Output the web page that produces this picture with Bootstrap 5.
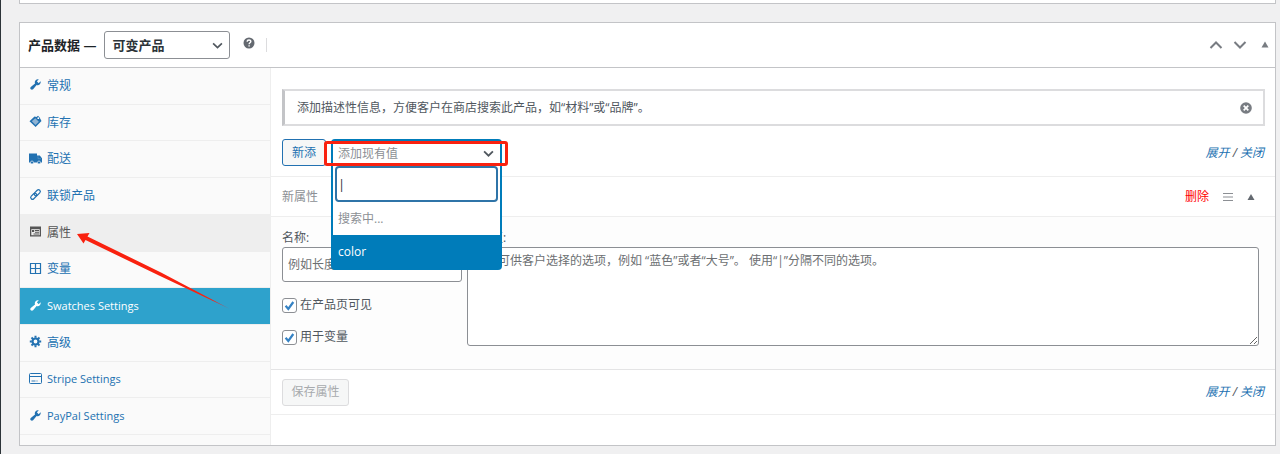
<!DOCTYPE html>
<html lang="zh-CN">
<head>
<meta charset="utf-8">
<meta name="viewport" content="width=device-width, initial-scale=1">
<title>产品数据</title>
<link href="https://cdn.jsdelivr.net/npm/bootstrap@5.3.0/dist/css/bootstrap.min.css" rel="stylesheet">
<style>
  body { background: #f0f0f1; color: #50575e; font-family: "Open Sans", "Noto Sans CJK SC", sans-serif; font-size: 12px; line-height: 18px; }
  a { color: #2271b1; text-decoration: none; }
  svg { display: block; flex: none; }
  .admin-page { border-left: 1px solid #2c3338; padding: 0 4px 9px 18px; min-height: 100vh; }
  .box { background: #fff; border: 1px solid #c3c4c7; }
  .box-above { height: 4px; border-top: 0; margin-bottom: 18px; }
  .box-head { height: 45px; border-bottom: 1px solid #c3c4c7; padding: 0 6px 0 8px; font-size: 13px; color: #1d2327; }
  .type-select { width: 126px; height: 28px; border: 1px solid #8c8f94; border-radius: 3px; padding: 0 24px 0 7px; font-size: 13px; font-weight: 600; color: #2c3338; line-height: 18px;
    background-image: url("data:image/svg+xml,%3Csvg xmlns='http://www.w3.org/2000/svg' viewBox='0 0 10 10'%3E%3Cpath d='M1 3l4 4 4-4' fill='none' stroke='%2350575e' stroke-width='1.5'/%3E%3C/svg%3E"); background-size: 11px; background-position: right 6px center; }
  .help-btn { margin: 0 11px 4px 13px; }
  .head-rule { width: 1px; height: 14px; background: #dcdcde; }
  .head-tools { gap: 10px; }
  .plain-btn { border: 0; background: none; padding: 0; color: #787c82; line-height: 18px; }
  .tabs { width: 251px; flex: none; background: #fafafa; border-right: 1px solid #eee; padding-bottom: 10px; }
  .tabs .tab-item { flex: 1 1 0; border-bottom: 1px solid #eee; }
  .tab-link { height: 100%; padding: 0 9px; gap: 5px; }
  .tab-link svg { width: 13px; height: 13px; margin-bottom: 2px; }
  .tab-link.current { background: #eee; color: #555; }
  .tab-link.swatches { background: #2ea2cc; color: #fff; }
  .latin { font-size: 11px; }
  .arrow { position: absolute; left: 57px; top: 164px; pointer-events: none; }
  .notice { margin: 21px 10px 0 11px; height: 37px; border: 2px solid #dcdcde; border-left: 3px solid #c3c4c7; padding: 0 11px 0 12px; }
  .tool-row { height: 51px; padding: 3px 11px 0; border-bottom: 1px solid #eee; }
  .new-btn { width: 44px; height: 27px; padding: 0; border: 1px solid #2271b1; border-radius: 3px; background: #f6f7f7; color: #2271b1; font-size: 12px; line-height: 18px; }
  .picker { width: 171px; margin-left: 5px; }
  .picker-box { width: 100%; height: 27px; border: 2px solid #007cba; border-bottom: 0; border-radius: 4px 4px 0 0; background: #fff; color: #8c8f94; padding: 0 6px 0 5px; text-align: left; }
  .picker-menu { position: absolute; z-index: 3; top: 100%; left: 0; right: 0; background: #fff; border: 2px solid #007cba; border-top: 0; border-radius: 0 0 4px 4px; }
  .picker-search { display: block; width: calc(100% - 4px); height: 36px; margin: 0 2px; border: 2px solid #2f74a8; border-radius: 4px; padding: 0 1px; font-size: 13px; color: #2c3338; outline: 0; }
  .picker-item { height: 33px; padding: 0 5px; display: flex; align-items: center; }
  .picker-item.wait { color: #8c8f94; }
  .picker-item.on { background: #007cba; color: #fff; }
  .red-frame { position: absolute; z-index: 4; top: 2px; left: -7px; right: -6px; height: 25px; border: 3px solid #f9210f; border-radius: 3px; pointer-events: none; }
  .attr-head { height: 40px; padding: 0 20px 0 11px; border-bottom: 1px solid #eee; color: #8c8f94; gap: 14px; }
  .remove-link { color: #f00; }
  .attr-body { background: #fdfdfd; padding: 12px 16px 23px 11px; gap: 5px; border-bottom: 1px solid #e4e4e5; }
  .name-col { width: 180px; flex: none; }
  .field-label { display: block; height: 18px; }
  .field { display: block; width: 100%; border: 1px solid #8c8f94; border-radius: 3px; background: #fff; font-size: 12px; line-height: 18px; color: #2c3338; }
  .field::placeholder { color: #6c6f72; opacity: 1; }
  input.field { height: 35px; padding: 0 5px; margin-bottom: 14px; }
  textarea.field { height: 99px; padding: 4px 6px; resize: both; }
  .tick { min-height: 18px; padding: 0; margin: 0 0 14px; gap: 3px; }
  .tick .form-check-input { width: 15px; height: 15px; margin: 0; float: none; border: 1px solid #8c8f94; border-radius: 3px; background-color: #fff; background-size: 13px; }
  .tick .form-check-input:checked { background-color: #fff; border-color: #8c8f94;
    background-image: url("data:image/svg+xml,%3Csvg xmlns='http://www.w3.org/2000/svg' viewBox='0 0 13 13'%3E%3Cpath d='M2.6 6.8l2.7 3.2 5-7' fill='none' stroke='%233582c4' stroke-width='2.2'/%3E%3C/svg%3E"); }
  .save-row { height: 45px; padding: 0 11px; border-bottom: 1px solid #eee; }
  .save-btn { width: 67px; height: 27px; padding: 0; border: 1px solid #dcdcde; border-radius: 3px; background: #f6f7f7; color: #a7aaad; font-size: 12px; line-height: 18px; }
  .panel-foot { height: 30px; }
</style>
</head>
<body>
<svg width="0" height="0" class="position-absolute" aria-hidden="true">
  <symbol id="wrench" viewBox="0 0 20 20"><path fill="currentColor" d="M16.68 9.77c-1.34 1.34-3.3 1.67-4.95.99l-5.41 6.52c-.99.99-2.59.99-3.58 0s-.99-2.59 0-3.57l6.52-5.42c-.68-1.65-.35-3.61.99-4.95 1.28-1.28 3.12-1.62 4.72-1.06l-2.89 2.89 2.82 2.82 2.86-2.87c.53 1.58.18 3.39-1.08 4.65z"/></symbol>
</svg>
<main class="admin-page">
  <div class="box box-above"></div>
  <section class="box">
    <header class="box-head d-flex align-items-center">
      <label for="ptype" class="fw-semibold me-2">产品数据 —</label>
      <select id="ptype" class="form-select type-select"><option>可变产品</option></select>
      <button class="plain-btn help-btn" type="button" aria-label="帮助">
        <svg width="12" height="12" viewBox="0 0 12 12"><circle cx="6" cy="6" r="5.5" fill="#646970"/><path d="M4.2 4.7C4.2 2.3 7.9 2.4 7.8 4.6 7.7 5.8 6.1 5.8 6.1 7.2M6.1 8.2v1.4" fill="none" stroke="#fff" stroke-width="1.4"/></svg>
      </button>
      <span class="head-rule me-auto"></span>
      <div class="head-tools d-flex align-items-center">
        <button class="plain-btn" type="button" aria-label="上移"><svg width="14" height="14" viewBox="0 0 14 14"><path d="M1.5 10 7 4.5 12.5 10" fill="none" stroke="currentColor" stroke-width="2"/></svg></button>
        <button class="plain-btn" type="button" aria-label="下移"><svg width="14" height="14" viewBox="0 0 14 14"><path d="M1.5 4 7 9.5 12.5 4" fill="none" stroke="currentColor" stroke-width="2"/></svg></button>
        <button class="plain-btn ms-1" type="button" aria-label="切换"><svg width="8" height="8" viewBox="0 0 8 8"><path d="M4 .5 7.5 6.500h-7z" fill="currentColor"/></svg></button>
      </div>
    </header>
    <div class="d-flex position-relative">
      <ul class="tabs list-unstyled mb-0 d-flex flex-column">
        <li class="tab-item"><a class="tab-link d-flex align-items-center" href="#"><svg><use href="#wrench"/></svg>常规</a></li>
        <li class="tab-item"><a class="tab-link d-flex align-items-center" href="#"><svg viewBox="0 0 13 13"><path d="M.5 6.200 5.500 1.500 7.500 2 9 .8l1.500 1.500L12.500 6 6.600 12z" fill="#2271b1"/><path d="M2.800 6.300 6.300 3.200l3.500 3.500-3.300 3.300z" fill="#8fb3d3"/><circle cx="9.300" cy="3.200" r=".9" fill="#fff"/></svg>库存</a></li>
        <li class="tab-item"><a class="tab-link d-flex align-items-center" href="#"><svg viewBox="0 0 13 13"><path d="M0 1.500h8v2h2.800L13 6.200v4.300H0z" fill="currentColor"/><path d="M9 4.300v2.400h3" fill="none" stroke="#5f97c8" stroke-width=".7"/><g fill="currentColor" stroke="#fafafa" stroke-width=".6"><circle cx="3" cy="10.500" r="1.500"/><circle cx="10" cy="10.500" r="1.500"/></g></svg>配送</a></li>
        <li class="tab-item"><a class="tab-link d-flex align-items-center" href="#"><svg viewBox="0 0 13 13"><g fill="none" stroke="currentColor" stroke-width="1.200" transform="rotate(-45 6.5 6.5)"><rect x=".5" y="4.700" width="7" height="3.600" rx="1.800"/><rect x="5.500" y="4.700" width="7" height="3.600" rx="1.800"/></g></svg>联锁产品</a></li>
        <li class="tab-item"><a class="tab-link current d-flex align-items-center" href="#"><svg viewBox="0 0 13 13"><path d="M1 1.500h11v10H1z" fill="currentColor"/><path d="M2.300 4.200h8.400v6H2.300z" fill="#eee"/><path d="M3 5h2.200v2H3zM6 5h4v1H6zM6 6.800h4v1H6zM4.500 8.600H10v1H4.500z" fill="currentColor"/></svg>属性</a></li>
        <li class="tab-item"><a class="tab-link d-flex align-items-center" href="#"><svg viewBox="0 0 13 13"><path d="M1.500 1.500h10v10h-10zM6.500 1.500v10M1.500 6.500h10" fill="none" stroke="currentColor" stroke-width="1.200"/></svg>变量</a></li>
        <li class="tab-item"><a class="tab-link swatches latin d-flex align-items-center" href="#"><svg><use href="#wrench"/></svg>Swatches Settings</a></li>
        <li class="tab-item"><a class="tab-link d-flex align-items-center" href="#"><svg viewBox="0 0 13 13"><circle cx="6.500" cy="6.500" r="3" fill="none" stroke="currentColor" stroke-width="2.200"/><path d="M6.500.8v2M6.500 10.200v2M.8 6.500h2M10.200 6.500h2M2.500 2.500l1.400 1.400M9.100 9.100l1.400 1.400M10.500 2.500 9.100 3.900M3.900 9.100l-1.400 1.400" stroke="currentColor" stroke-width="2"/></svg>高级</a></li>
        <li class="tab-item"><a class="tab-link latin d-flex align-items-center" href="#"><svg viewBox="0 0 13 13"><rect x=".5" y="1.500" width="12" height="10" rx="1" fill="none" stroke="currentColor"/><path d="M1 4.500h11" stroke="currentColor"/><path d="M2.500 9h4M7.500 9h1" stroke="currentColor" stroke-width=".9"/></svg>Stripe Settings</a></li>
        <li class="tab-item"><a class="tab-link latin d-flex align-items-center" href="#"><svg><use href="#wrench"/></svg>PayPal Settings</a></li>
      </ul>
      <svg class="arrow" width="154" height="82" viewBox="0 0 154 82"><defs><linearGradient id="fade" x1="0" x2="1"><stop offset=".88" stop-color="#f9210f"/><stop offset="1" stop-color="#b0506a" stop-opacity=".7"/></linearGradient></defs><path d="M0 2 12.500 1 10.500 4.500 84 40.500 153 77 82 43.500 8.500 8 6.500 11.500z" fill="url(#fade)"/></svg>

      <div class="flex-fill">
        <div class="notice d-flex align-items-center justify-content-between">
          <span>添加描述性信息，方便客户在商店搜索此产品，如“材料”或“品牌”。</span>
          <button class="plain-btn" type="button" aria-label="忽略"><svg width="12" height="12" viewBox="0 0 12 12"><circle cx="6" cy="6" r="5.800" fill="currentColor"/><path d="m3.700 3.700 4.600 4.600M8.300 3.700 3.700 8.300" stroke="#fff" stroke-width="1.700"/></svg></button>
        </div>
        <div class="tool-row d-flex align-items-center">
          <button class="new-btn" type="button">新添</button>
          <div class="picker position-relative">
            <button class="picker-box d-flex align-items-center justify-content-between" type="button"><span>添加现有值</span><svg width="11" height="11" viewBox="0 0 10 10"><path d="m1 3 4 4 4-4" fill="none" stroke="#50575e" stroke-width="1.600"/></svg></button>
            <div class="picker-menu">
              <input class="picker-search" type="text" aria-label="搜索" value="|">
              <div class="picker-item wait">搜索中...</div>
              <div class="picker-item on">color</div>
            </div>
            <span class="red-frame"></span>
          </div>
          <em class="ms-auto"><a href="#">展开</a> / <a href="#">关闭</a></em>
        </div>
        <div class="attr-head d-flex align-items-center">
          <span class="me-auto">新属性</span>
          <a class="remove-link" href="#">删除</a>
          <svg width="10" height="10" viewBox="0 0 10 10"><path d="M0 1.500h10M0 5h10M0 8.500h10" stroke="#8c8f94"/></svg>
          <svg width="8" height="8" viewBox="0 0 8 8"><path d="M4 1 7.500 7h-7z" fill="#646970"/></svg>
        </div>
        <div class="attr-body d-flex">
          <div class="name-col">
            <label class="field-label" for="aname">名称:</label>
            <input id="aname" class="field" type="text" placeholder="例如长度或重量">
            <div class="form-check tick d-flex align-items-center"><input class="form-check-input" type="checkbox" id="vis" checked><label for="vis">在产品页可见</label></div>
            <div class="form-check tick d-flex align-items-center mb-0"><input class="form-check-input" type="checkbox" id="vari" checked><label for="vari">用于变量</label></div>
          </div>
          <div class="flex-fill">
            <label class="field-label" for="avals">属性值:</label>
            <textarea id="avals" class="field" placeholder="输入可供客户选择的选项，例如 “蓝色”或者“大号”。 使用“|”分隔不同的选项。"></textarea>
          </div>
        </div>
        <div class="save-row d-flex align-items-center justify-content-between">
          <button class="save-btn" type="button" disabled>保存属性</button>
          <em><a href="#">展开</a> / <a href="#">关闭</a></em>
        </div>
        <div class="panel-foot"></div>
      </div>
    </div>
  </section>
</main>
<script src="https://cdn.jsdelivr.net/npm/bootstrap@5.3.0/dist/js/bootstrap.bundle.min.js"></script>
</body>
</html>
